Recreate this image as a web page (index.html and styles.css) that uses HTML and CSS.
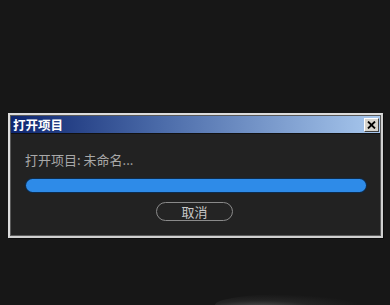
FILE: index.html
```html
<!DOCTYPE html>
<html lang="zh">
<head>
<meta charset="utf-8">
<title>打开项目</title>
<link rel="stylesheet" href="styles.css">
</head>
<body>
<div class="dialog">
  <div class="titlebar">
    <span class="title">打开项目</span>
    <button class="close" aria-label="关闭">
      <svg width="9" height="8" viewBox="0 0 9 8"><path d="M1 0.5 L8 7.5 M8 0.5 L1 7.5" stroke="#000" stroke-width="1.8" fill="none"/></svg>
    </button>
  </div>
  <div class="content">
    <div class="label">打开项目: 未命名...</div>
    <div class="bar"><div class="fill" style="width:100%"></div></div>
    <div class="actions"><button class="cancel">取消</button></div>
  </div>
</div>
<div class="glow"></div>
</body>
</html>
```
FILE: styles.css
```css
html, body {
  margin: 0;
  padding: 0;
  background: #171717;
  width: 390px;
  height: 305px;
  overflow: hidden;
  font-family: "Noto Sans CJK SC", "Liberation Sans", sans-serif;
}
body { position: relative; }
.dialog {
  margin: 113px 0 0 8px;
  width: 375px;
  box-sizing: border-box;
  border: 2px solid #dcdcdc;
  border-right-color: #cfcfcf;
  border-bottom-color: #cfcfcf;
  box-shadow: 1px 1px 0 #0c0c0c;
  padding: 1px;
  background: #5a5a5a;
}
.titlebar {
  height: 17px;
  display: flex;
  align-items: center;
  justify-content: space-between;
  background: linear-gradient(to right, #0e2670 0%, #4a6aa8 40%, #a8c8ee 100%);
  padding-left: 2px;
}
.title {
  color: #fff;
  font-weight: bold;
  font-size: 12.5px;
  line-height: 17px;
}
.close {
  width: 15px;
  height: 14px;
  margin: 1px 1px 0 0;
  padding: 0;
  display: flex;
  align-items: center;
  justify-content: center;
  background: #d6d3cc;
  border: 1px solid;
  border-color: #ffffff #404040 #404040 #ffffff;
  box-sizing: border-box;
}
.content {
  background: #222222;
  border-top: 1px solid #111;
  padding: 18px 13px 14px 14px;
}
.label {
  color: #a9a9a9;
  font-size: 13px;
  line-height: 16px;
  height: 16px;
}
.bar {
  margin-top: 10px;
  height: 15px;
  border-radius: 8px;
  background: #0d2c4d;
  padding: 1px;
  box-sizing: border-box;
}
.fill {
  height: 100%;
  border-radius: 7px;
  background: #2e8be8;
}
.actions {
  margin-top: 9px;
  display: flex;
  justify-content: center;
  padding-right: 3px;
}
.cancel {
  width: 77px;
  height: 19px;
  border-radius: 10px;
  border: 1px solid #8a8a8a;
  background: #242424;
  color: #c8c8c8;
  font-family: "Noto Sans CJK SC", sans-serif;
  font-size: 13px;
  line-height: 15px;
  padding: 0;
}
.glow {
  position: absolute;
  left: 215px;
  top: 294px;
  width: 150px;
  height: 22px;
  border-radius: 50%;
  background: radial-gradient(ellipse at 30% 60%, rgba(180,180,180,0.35) 0%, rgba(110,110,110,0.15) 35%, rgba(23,23,23,0) 70%);
}
```
